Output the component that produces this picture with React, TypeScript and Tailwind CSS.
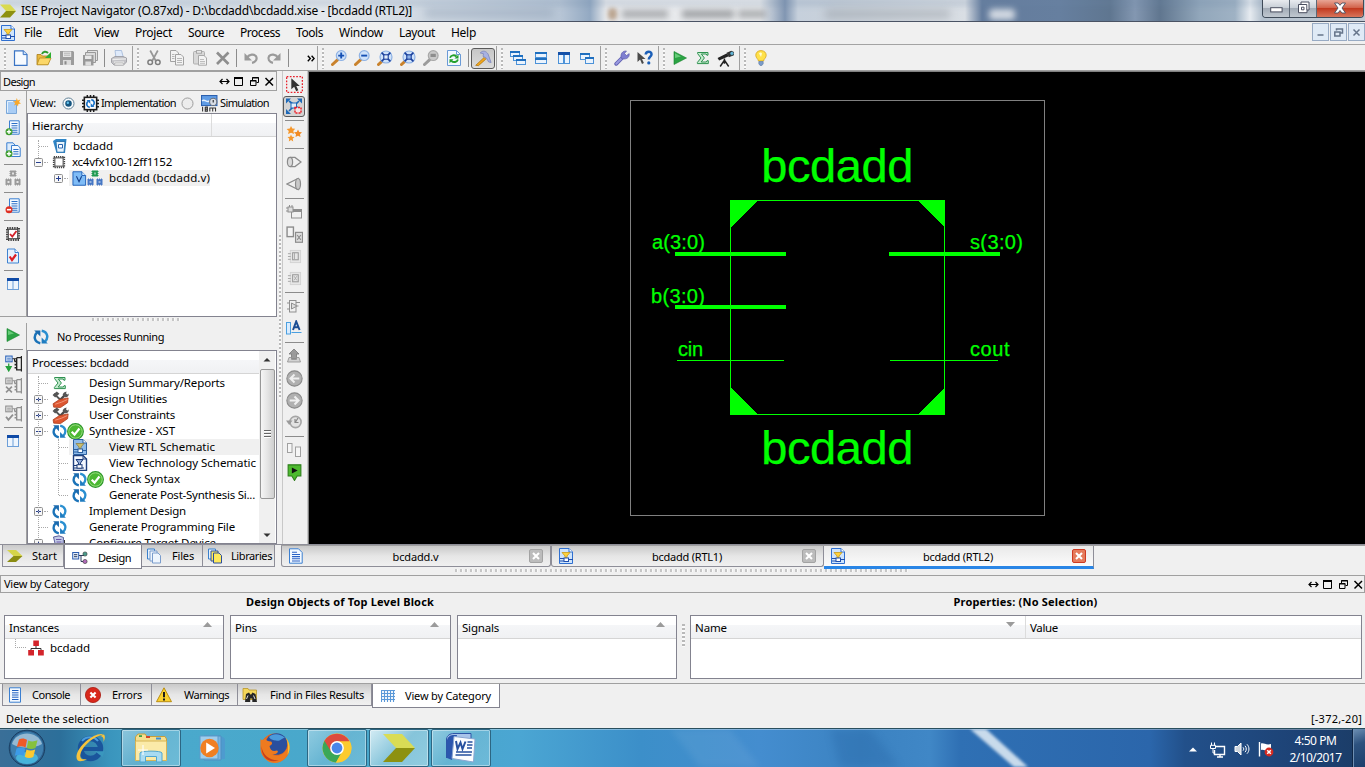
import { useLayoutEffect, useRef, type ReactNode } from "react";

/* ---------- text ---------- */

/** One-line label whose tracking is adjusted so that it spans `w` pixels. */
function T({ w, className = "", children }: { w: number; className?: string; children: string }) {
  const ref = useRef<HTMLSpanElement>(null);
  useLayoutEffect(() => {
    const el = ref.current;
    if (!el) return;
    el.style.letterSpacing = "0px";
    const natural = el.getBoundingClientRect().width;
    el.style.letterSpacing = `${(w - natural) / children.length}px`;
  }, [w, children]);
  return (
    <span ref={ref} className={`inline-block shrink-0 whitespace-nowrap ${className}`}>
      {children}
    </span>
  );
}

/* ---------- icons ---------- */

function I({ s = 16, vb = "0 0 16 16", className = "", children }: { s?: number; vb?: string; className?: string; children: ReactNode }) {
  return (
    <svg width={s} height={s} viewBox={vb} className={`block shrink-0 ${className}`} fill="none">
      {children}
    </svg>
  );
}

const Xilinx = ({ s = 16 }: { s?: number }) => (
  <I s={s}>
    <path d="M0 1.5H10L16 8H6Z" fill="#d9da4f" />
    <path d="M6 8H16L10 14.5H0Z" fill="#8d9010" />
  </I>
);

const Chevron2 = () => (
  <I>
    <path d="M0 2H9L15.5 8H6.5Z" fill="#d5d44a" />
    <path d="M6.5 8H15.5L9 14H0Z" fill="#8b8c12" />
  </I>
);

const SchemDoc = ({ dim }: { dim?: boolean }) => (
  <I>
    <path d="M1.5 .5H11L14.5 4V15.5H1.5Z" fill={dim ? "#8fbbea" : "#cfe4fb"} stroke={dim ? "#2b5f9e" : "#2f6fd0"} />
    <path d="M11 .5V4H14.5" fill="#fff" stroke={dim ? "#2b5f9e" : "#2f6fd0"} />
    <path d="M4 4.5H12L9 8V10H7V8Z" fill={dim ? "#c9bd6c" : "#ffd23c"} stroke={dim ? "#8d8248" : "#c99a18"} strokeWidth=".8" />
    <path d="M2 10.5H6M2 13H6M11 11.5H15" stroke={dim ? "#2b5f9e" : "#1f4fae"} />
    <rect x="6" y="10" width="4.5" height="3.5" fill="#fff" stroke={dim ? "#2b5f9e" : "#1f4fae"} />
  </I>
);

const TechDoc = () => (
  <I>
    <path d="M1.5 .5H11L14.5 4V15.5H1.5Z" fill="#f4f8ff" stroke="#20407e" strokeWidth="1.4" />
    <path d="M11 .5V4H14.5" stroke="#20407e" />
    <path d="M4 4.5H11L8.5 8V10H6.5V8Z" fill="#8fa9d6" stroke="#1b3a78" />
    <path d="M2 10.5H5M2 13H12" stroke="#1b3a78" />
    <rect x="5" y="9.7" width="5" height="3.5" fill="#fff" stroke="#1b3a78" />
  </I>
);

const NewFile = () => (
  <I>
    <path d="M1.5 .8H10.2L14 4.6V15.3H1.5Z" fill="#f7fbff" stroke="#3a74c4" strokeWidth="1.2" />
    <path d="M10.2 .8V4.6H14" fill="#cfe1f7" stroke="#3a74c4" />
  </I>
);

const OpenFile = () => (
  <I>
    <path d="M1 4.5H5L6.5 6H12V14.5H1Z" fill="#e9b93f" stroke="#a87b17" strokeWidth=".8" />
    <path d="M3.5 8H15L12 14.8H1Z" fill="#fbd768" stroke="#b58a20" strokeWidth=".8" />
    <path d="M6 4C7 1.5 10 1 12 3" stroke="#2c9a2c" strokeWidth="2" />
    <path d="M15 2V8H9Z" fill="#2fae2f" />
  </I>
);

const Save = () => (
  <I>
    <path d="M1 1H14L15 2V15H1Z" fill="#9c9c9c" />
    <path d="M4 1.6H12.2V7H4Z" fill="#e6e6e6" />
    <path d="M4 10H12V15H4Z" fill="#dcdcdc" />
    <path d="M5.5 11.2H7.5V14.5H5.5Z" fill="#8b8b8b" />
    <path d="M5 3.2H11.2M5 5.2H11.2" stroke="#b4b4b4" />
  </I>
);

const SaveAll = () => (
  <I>
    <path d="M5.5 .5H15.5V10.5H5.5Z" fill="#e2e2e2" stroke="#999" />
    <path d="M3.5 2.5H13.5V12.5H3.5Z" fill="#dadada" stroke="#999" />
    <path d="M1 5H11.5V15.5H1Z" fill="#999" />
    <path d="M3 5.6H9.5V9H3Z" fill="#e8e8e8" />
    <path d="M3.4 11.5H9V15.5H3.4Z" fill="#dedede" />
  </I>
);

const Print = () => (
  <I>
    <path d="M4 .5L10.5 .5L12.5 8H5Z" fill="#dfeafa" stroke="#9fb6d8" strokeWidth=".8" />
    <path d="M.5 8.5L4 6.5H12L15.5 8V12L12.5 15H3L.5 12.5Z" fill="#c2c2c6" stroke="#96969c" strokeWidth=".8" />
    <path d="M1.5 9.5L15 8.8M3 12.2H13" stroke="#ececec" strokeWidth="1.3" />
    <path d="M4 13H12L13 15H3.5Z" fill="#f6f6f6" stroke="#a5a5a5" strokeWidth=".6" />
  </I>
);

const Cut = () => (
  <I>
    <path d="M4.2 .5L9.6 10.5M11.8 .5L6.4 10.5" stroke="#969696" strokeWidth="1.7" />
    <circle cx="4.2" cy="12.3" r="2.3" stroke="#7e7e7e" strokeWidth="1.5" />
    <circle cx="11.8" cy="12.3" r="2.3" stroke="#7e7e7e" strokeWidth="1.5" />
  </I>
);

const Copy = () => (
  <I>
    <path d="M1.5 .5H7L9.5 3V11.5H1.5Z" fill="#f3f3f3" stroke="#a2a2a2" />
    <path d="M6.5 4.5H12L14.5 7V15H6.5Z" fill="#f3f3f3" stroke="#a2a2a2" />
    <path d="M8 8.5H13M8 10.5H13M8 12.5H13M3 4.5H5.5M3 6.5H5.5M3 8.5H5.5" stroke="#b7b7b7" />
  </I>
);

const Paste = () => (
  <I>
    <rect x="1.5" y="1.5" width="11" height="12.5" rx="1" fill="#d8d8d8" stroke="#b0b0b0" />
    <rect x="4.5" y=".6" width="5" height="2.6" fill="#eee" stroke="#a5a5a5" />
    <path d="M6.5 5.5H12L14.5 8V15.2H6.5Z" fill="#f3f3f3" stroke="#a8a8a8" />
    <path d="M8 9.5H12M8 11.5H13M8 13.3H13" stroke="#bdbdbd" />
  </I>
);

const Del = () => (
  <I>
    <path d="M2 2.5L13.5 14M13.5 2.5L2 14" stroke="#8e8e8e" strokeWidth="2.7" />
  </I>
);

const Undo = ({ flip = false }: { flip?: boolean }) => (
  <I className={flip ? "-scale-x-100" : ""}>
    <path d="M4 7.5C6.5 4 11 3.8 13 6.2C14.5 8.8 13 12 9 12.8" stroke="#9a9a9a" strokeWidth="2.2" />
    <path d="M1.5 3V10.5H9Z" fill="#9a9a9a" />
  </I>
);

const Mag = ({ kind }: { kind: "plus" | "minus" | "fit" | "sel" | "gray" }) => {
  const gray = kind === "gray";
  const big = kind === "fit" || kind === "sel";
  return (
    <I>
      <path d="M1.5 14.5L6.5 9.8" stroke={gray ? "#9b9b9b" : "#c9822c"} strokeWidth="3" strokeLinecap="round" />
      <circle cx={big ? 9 : 10.2} cy={big ? 7 : 5.6} r={big ? 6 : 4.9} fill={gray ? "#c9c9c9" : "#cfe2fa"} stroke={gray ? "#a8a8a8" : "#8fb2e4"} strokeWidth="1.2" />
      {kind === "plus" && <path d="M10.2 2.6V8.6M7.2 5.6H13.2" stroke="#1650b4" strokeWidth="1.9" />}
      {kind === "minus" && <path d="M7.2 5.6H13.2" stroke="#1650b4" strokeWidth="1.9" />}
      {gray && <path d="M7.5 3.8H12.8V7H7.5Z" fill="#8d8d8d" />}
      {big && (
        <>
          <path d="M4.6 2.6L13.4 11.4M13.4 2.6L4.6 11.4" stroke="#1a3f9c" strokeWidth="1.6" />
          <rect x="6.8" y="4.8" width="4.4" height="4.4" fill={kind === "sel" ? "#8fb4ea" : "#e4effc"} stroke="#1a3f9c" strokeWidth="1.1" />
        </>
      )}
    </I>
  );
};

const Refresh = () => (
  <I>
    <path d="M1.5 .5H10.5L14.5 4.5V15.5H1.5Z" fill="#f2f8ff" stroke="#6a9ad6" />
    <path d="M10.5 .5V4.5H14.5" stroke="#6a9ad6" />
    <path d="M4 7.8C5 5 8.5 4.6 10.5 6.5M12 9.5C11 12.3 7.5 12.8 5.4 11" stroke="#23a02c" strokeWidth="1.9" />
    <path d="M12.5 4.6V8.6H8.5ZM3.5 13.2V9.2H7.5Z" fill="#23a02c" />
  </I>
);

const Hammer = () => (
  <I s={18}>
    <path d="M1.5 14.5L9 7.5L10.5 9L4 14.8Z" fill="#f2a81d" stroke="#a56a08" strokeWidth=".6" />
    <path d="M5.5 3.5C8 .8 11 2 12.5 4.5L15.2 12L13 11.5L11 8L8 6.5L8.5 4.2Z" fill="#a7b1e2" stroke="#7a84bc" strokeWidth=".7" />
  </I>
);

const Win = ({ x, y, w, h }: { x: number; y: number; w: number; h: number }) => (
  <>
    <rect x={x + 0.5} y={y + 0.5} width={w - 1} height={h - 1} fill="#eaf3fd" stroke="#4c92d8" />
    <rect x={x} y={y} width={w} height="2" fill="#1f6fbf" />
  </>
);

const Cascade = () => (
  <I>
    <Win x={0} y={1} w={10} h={6} />
    <Win x={3} y={5} w={10} h={6} />
    <Win x={6} y={9} w={10} h={6} />
  </I>
);
const TileH = () => (
  <I>
    <Win x={2} y={2} w={12} h={6} />
    <Win x={2} y={8} w={12} h={6} />
  </I>
);
const TileV = () => (
  <I>
    <Win x={2} y={2} w={6} h={12} />
    <Win x={8} y={2} w={6} h={12} />
    <path d="M2 2H14V5H2Z" fill="#1450a8" />
  </I>
);
const Float = () => (
  <I>
    <Win x={1} y={3} w={10} h={7} />
    <Win x={6} y={7} w={9} h={7} />
  </I>
);

const Wrench = () => (
  <I>
    <path d="M2.2 13.8L9 7" stroke="#6464b4" strokeWidth="3.8" strokeLinecap="round" />
    <path d="M2.2 13.7L9 7" stroke="#9a9ae0" strokeWidth="1.9" strokeLinecap="round" />
    <path d="M7.5 8.5C5.8 4 8.5 .6 12.5 1L10.5 3.5L12.5 5.5L15.2 3.6C15.8 7.6 12 10.2 7.5 8.5Z" fill="#7e7ed0" stroke="#5858a8" strokeWidth=".6" />
  </I>
);

const WhatsThis = () => (
  <I>
    <path d="M.5 2L.5 12L3.1 9.6L5 14L6.9 13.1L5 9H8.5Z" fill="#4a4a4a" />
    <path d="M8.7 4.5C9 .8 14.7 .8 14.5 4.5C14.4 6.7 11.8 6.8 11.8 9.5" stroke="#1b5fb8" strokeWidth="2.5" />
    <circle cx="11.8" cy="12.9" r="1.6" fill="#1b5fb8" />
  </I>
);

const Play = () => (
  <I>
    <path d="M2 1.5L14.5 8L2 14.5Z" fill="#2ba344" stroke="#14852c" strokeWidth=".6" />
    <path d="M3 3.3L9 6.5L3 8Z" fill="#67cc79" />
  </I>
);

const Sigma = () => (
  <I>
    <path d="M2.6 2.5H13V5.2H11.8L11.2 4H6.4L9.4 8L6.2 12H11.4L12 10.7H13.3V13.6H2.4V12.4L6 8L2.6 3.6Z" fill="#c6ecd0" stroke="#2f9150" strokeWidth="1" />
  </I>
);

const Telescope = () => (
  <I s={17}>
    <path d="M.5 7.5L9.5 3L11 5.8L2 9.8Z" fill="#222" />
    <path d="M9 2.6L13.5 .6L15.8 5L11.2 6.8Z" fill="#333" />
    <circle cx="14" cy="3.2" r="1.9" fill="#62b6d8" stroke="#222" strokeWidth=".6" />
    <path d="M7 8V11M7 9.5L3 15.5M7 9.5L11 15.5M7 9V13" stroke="#222" strokeWidth="1.4" />
  </I>
);

const Bulb = () => (
  <I>
    <path d="M8 .6C4.5 .6 2.6 3 2.8 5.6C3 8 5 8.8 5.5 11H10.5C11 8.8 13 8 13.2 5.6C13.4 3 11.5 .6 8 .6Z" fill="#ffe14a" stroke="#d8a51c" strokeWidth=".8" />
    <path d="M6 3.4C6.8 2.3 8.4 2.3 9 3.6L8 7Z" fill="#fffbd2" />
    <path d="M5.8 11.5H10.2V13.8L9 15.4H7L5.8 13.8Z" fill="#7d9cc8" stroke="#4d6e9e" strokeWidth=".5" />
  </I>
);

const DocLines = ({ badge }: { badge?: "plus" | "minus" | "plus2" }) => (
  <I>
    {badge === "plus2" && <path d="M1.8 .8H8L10 3V11H1.8Z" fill="#dcebfb" stroke="#3b7fd0" />}
    <path d={badge === "plus2" ? "M6.5 3.5H13L15.2 6V14.5H6.5Z" : badge ? "M4.5 .8H14.2V14.2H4.5Z" : "M1.5 .8H10.5L14.2 4.5V15.2H1.5Z"} fill="#f4f9ff" stroke="#3b7fd0" />
    {badge === "plus2" ? (
      <path d="M8.3 7.5H13.5M8.3 9.7H13.5M8.3 12H13.5" stroke="#2b6fc6" />
    ) : badge ? (
      <path d="M6.5 3.5H12.5M6.5 5.7H12.5M6.5 8H12.5M6.5 10.2H12.5M6.5 12.3H12.5" stroke="#2b6fc6" strokeWidth="1.1" />
    ) : (
      <path d="M4 4.2H9M4 6.5H12M4 8.6H12M4 10.8H12M4 13H12" stroke="#2b62c6" strokeWidth="1.1" />
    )}
    {badge === "minus" ? (
      <>
        <circle cx="4" cy="11.7" r="3.5" fill="#df2f22" />
        <path d="M1.9 11.7H6.1" stroke="#fff" strokeWidth="1.6" />
      </>
    ) : badge ? (
      <>
        <circle cx="4" cy="11.7" r="3.5" fill="#3f9e2f" />
        <path d="M1.8 11.7H6.2M4 9.5V13.9" stroke="#fff" strokeWidth="1.4" />
      </>
    ) : null}
  </I>
);

const NewSource = () => (
  <I>
    <path d="M1.5 2.5H11.5V15.5H1.5Z" fill="#a9cdf5" stroke="#7aa7d8" />
    <path d="M2.5 14.5V3.5H8" stroke="#e4f1fe" />
    <path d="M11.8 0L12.7 2.6L15.4 1.6L14 4L16 5.6L13.4 5.9L13 8.6L11.5 6.4L9 7.4L10.2 5L8 3.4L10.9 2.9Z" fill="#f7a82d" />
  </I>
);

const Chips = ({ color = "gray" }: { color?: "gray" | "color" }) => {
  const gray = color === "gray";
  const top = gray ? "#9a9a9a" : "#1f9a52";
  const bot = gray ? "#9a9a9a" : "#4677c4";
  const chip = (x: number, y: number, c: string) => (
    <>
      <path d={`M${x + 1.5} ${y}V7M${x + 3.5} ${y}v7M${x + 5.5} ${y}v7M${x} ${y + 1.5}h7M${x} ${y + 3.5}h7M${x} ${y + 5.5}h7`.replace("V7", "v7")} stroke={c} />
      <rect x={x + 1} y={y + 1} width="5" height="5" fill={c} />
      <rect x={x + 2.5} y={y + 2.5} width="2" height="2" fill={gray ? "#e2e2e2" : "#ffffff"} fillOpacity={gray ? 1 : 0.45} />
    </>
  );
  return (
    <I>
      {chip(4.5, 0, top)}
      {chip(0, 8.5, bot)}
      {chip(9, 8.5, bot)}
    </I>
  );
};

const ChipCheck = ({ check = true }: { check?: boolean }) => (
  <I s={check ? 16 : 14}>
    <rect x="2" y="2" width="12" height="12" stroke="#444" strokeWidth="2" strokeDasharray="1.4 1" />
    <rect x="3.3" y="3.3" width="9.4" height="9.4" fill="#fff" stroke="#444" strokeWidth="1.1" />
    {check && <path d="M5 8L7.3 10.5L11.5 5" stroke="#d3222a" strokeWidth="1.8" />}
  </I>
);

const DocCheck = () => (
  <I>
    <path d="M2.5 1H10L13.5 4.5V15H2.5Z" fill="#e6f1fd" stroke="#3f82d0" />
    <path d="M10 1V4.5H13.5" fill="#fff" stroke="#3f82d0" />
    <path d="M4.7 8.5L7 12L11 6.5" stroke="#dd1f24" strokeWidth="2.2" />
  </I>
);

const Cols = () => (
  <I>
    <rect x="2.5" y="2.5" width="11" height="11" fill="#eef5fd" stroke="#6d9fd8" />
    <path d="M2 2H14V5H2Z" fill="#0f4aa6" />
    <path d="M8 5V13.5" stroke="#6d9fd8" />
  </I>
);

const ProcChip = ({ kind }: { kind: "run" | "stop" | "check" }) => {
  const on = kind === "run";
  const c = on ? "#222" : "#8f8f8f";
  return (
    <I s={17}>
      <rect x=".7" y="1" width="6" height="5.4" fill={on ? "#e1eefc" : "#e4e4e4"} stroke={on ? "#2b62b8" : c} />
      <path d="M2 3H5.5M2 4.7H5.5" stroke={on ? "#2b62b8" : c} strokeWidth=".8" />
      <path d="M7 3.5H11M9 3.5V6" stroke={c} />
      <path d="M11 2.5V14.5M15.5 1V15.5M11 2.5H15.5M11 14H15.5" stroke={c} strokeWidth="1.3" />
      <path d="M9 6H11M9 9H11M9 12H11" stroke={c} strokeWidth="1.6" />
      {kind === "run" && <path d="M3.5 8V12M1.2 11H5.8L3.5 15Z" stroke="#25a03c" fill="#25a03c" strokeWidth="1.2" />}
      {kind === "stop" && <path d="M1 9L6.5 14.5M6.5 9L1 14.5" stroke={c} strokeWidth="1.5" />}
      {kind === "check" && <path d="M1 11L3.2 14L7.5 9" stroke={c} strokeWidth="1.7" />}
    </I>
  );
};

const Cycle = ({ s = 16 }: { s?: number }) => (
  <I s={s}>
    <path d="M7.3 14.2C1.2 13 .2 7.2 4 3.4" stroke="#1b73b8" strokeWidth="2.5" />
    <path d="M1.2 1.4H7.4V7.6Z" fill="#1b6aae" />
    <path d="M8.7 1.8C14.8 3 15.8 8.8 12 12.6" stroke="#2a8fd0" strokeWidth="2.5" />
    <path d="M14.8 14.6H8.6V8.4Z" fill="#1f7cc0" />
  </I>
);

const Ok = () => (
  <I s={17}>
    <circle cx="8" cy="8" r="7.4" fill="#4bb832" stroke="#2c962a" />
    <circle cx="8" cy="8" r="6.3" stroke="#a5e08e" strokeWidth=".8" />
    <path d="M4.4 8.2L7.1 10.9L11.7 5.2" stroke="#fff" strokeWidth="2.1" />
  </I>
);

const Tools = () => (
  <I s={17}>
    <path d="M2 2.5L11.5 12" stroke="#555" strokeWidth="1.8" />
    <path d="M.5 3.8L4.5 .4L7 2.5L3 6.2Z" fill="#555" />
    <path d="M13.5 2.5L7.5 8.5" stroke="#4a4a4a" strokeWidth="2.2" />
    <path d="M10 3.4C10.6 1 13 .2 14 .8L12.6 2.6L13.8 3.8L15.7 2.4C16 5.4 14 6.4 11.8 5.8Z" fill="#555" />
    <path d="M1 12L7 8L15.2 6.5L14.7 11L8 15.6L1.6 15.2Z" fill="#dd5630" stroke="#a83a1a" strokeWidth=".7" />
    <path d="M3 12.4L9 10.5L14.5 8" stroke="#f4a184" strokeWidth=".8" />
  </I>
);

const ProjectDoc = () => (
  <I>
    <path d="M1 3L4 1H14.5L13 15H4.5Z" fill="#2f86c8" />
    <path d="M4 3.5H13L12 14.2H5Z" fill="#e8f4fd" stroke="#1e6aa8" strokeWidth=".8" />
    <path d="M6.5 6.5H10.5V10H6.5Z" fill="#fff" stroke="#2b66b0" />
  </I>
);

const VFile = () => (
  <I s={15}>
    <path d="M1 .8H10.5L14.5 4.8V15.2H1Z" fill="#7fbcf6" stroke="#1f60b8" />
    <path d="M10.5 .8V4.8H14.5" fill="#d8ecff" stroke="#1f60b8" />
    <path d="M4.7 5.5L7.5 11.5L10.3 5.5" stroke="#123f8c" strokeWidth="1.2" />
  </I>
);

const ImplChip = () => (
  <I s={17}>
    <rect x="2.2" y="2.2" width="11.6" height="11.6" stroke="#1c1c1c" strokeWidth="1.5" fill="#fff" />
    <path d="M5 0V2M8 0V2M11 0V2M5 14V16M8 14V16M11 14V16M0 5H2M0 8H2M0 11H2M14 5H16M14 8H16M14 11H16" stroke="#1c1c1c" strokeWidth="1.4" />
    <path d="M7.3 11.6C4 11 3.8 7.8 5.6 6M8.7 4.4C12 5 12.2 8.2 10.4 10" stroke="#1b73c8" strokeWidth="1.6" />
    <path d="M4.2 4.8H7.8V8.2ZM11.8 11.2H8.2V7.8Z" fill="#1b73c8" />
  </I>
);

const SimIcon = () => (
  <I s={17}>
    <rect x=".5" y=".5" width="14.5" height="9.5" fill="#5f9ce6" stroke="#2b5fae" />
    <path d="M1 5.5C4 3 5 8 8 5.5" stroke="#e4f1ff" strokeWidth="1.4" />
    <circle cx="11.5" cy="6.5" r="3.4" fill="#d7dde6" stroke="#68707c" />
    <path d="M11.5 4.6V7" stroke="#222" />
    <path d="M.5 10.8H15.5V16H.5Z" fill="#f4f4f4" />
    <path d="M1.5 11V15.5M4 11.4H6V15.2H4V11.4M4 13.3H6M8.3 15.5V12.2H13.7V15.5M11 12.2V15.5" stroke="#333" strokeWidth="1" />
  </I>
);

const Radio = ({ on }: { on?: boolean }) => (
  <I s={13}>
    <circle cx="8" cy="8" r="6.8" fill={on ? "#f8fbfd" : "#ececec"} stroke={on ? "#5c7c92" : "#9a9a9a"} strokeWidth="1.2" />
    {on && <circle cx="8" cy="8" r="4" fill="#15557f" />}
    {on && <circle cx="7.2" cy="7" r="1.5" fill="#62c2ec" />}
  </I>
);

const PlusBox = ({ minus }: { minus?: boolean }) => (
  <I s={9} vb="0 0 9 9">
    <rect x=".5" y=".5" width="8" height="8" rx="1" fill="#f7f7f7" stroke="#8f8f8f" />
    <path d={minus ? "M2 4.5H7" : "M2 4.5H7M4.5 2V7"} stroke="#27408f" />
  </I>
);

const Pointer = () => (
  <I s={17}>
    <rect x=".6" y=".6" width="14.8" height="14.8" stroke="#e8202a" strokeWidth="1.2" strokeDasharray="1.6 1.4" />
    <path d="M5 2V12.5L7.7 10.2L9.6 14.4L11.6 13.4L9.7 9.4H13Z" fill="#333" />
  </I>
);

const ZoomArea = () => (
  <I>
    <path d="M3 3L12 10M13 3L3 13" stroke="#1d69b8" strokeWidth="1.7" />
    <path d="M0 .5H5L0 5.5ZM16 .5V5.5L11 .5ZM0 16V11L5 16Z" fill="#1d69b8" />
    <rect x="5" y="5" width="5.5" height="5" fill="#dfeefc" stroke="#1d69b8" />
    <rect x="9" y="9.5" width="6" height="5.5" fill="#f3e4e6" stroke="#e8202a" strokeWidth="1.5" strokeDasharray="2 1" />
  </I>
);

const Stars = () => (
  <I>
    <path d="M5 0L6.3 2.6L9.2 2.8L7.2 5L8.2 8L5 6.8L2 8L2.8 5L.6 3L3.8 2.6Z" fill="#f5972b" />
    <path d="M12 3.5L13.2 6L16 6.3L14 8.2L14.5 11L12 9.7L9.5 11L10 8.2L8 6.3L10.8 6Z" fill="#f28a22" />
    <path d="M5 8.5L6 10.8L8.5 11L6.7 12.8L7.2 15.4L5 14L2.8 15.4L3.3 12.8L1.5 11L4 10.8Z" fill="#f5972b" />
  </I>
);

const GateR = ({ flip }: { flip?: boolean }) => (
  <I className={flip ? "-scale-x-100" : ""}>
    {flip ? (
      <>
        <path d="M4 2.5L15 8L4 13.5Z" fill="#efefef" stroke="#8b8b8b" strokeWidth="1.2" />
        <ellipse cx="4" cy="8" rx="2.5" ry="5.5" fill="#c9c9c9" stroke="#8b8b8b" strokeWidth="1.2" />
      </>
    ) : (
      <>
        <path d="M4 3.4H9L15 8L9 12.6H4" fill="#efefef" stroke="#8b8b8b" strokeWidth="1.2" />
        <ellipse cx="4" cy="8" rx="2.6" ry="4.6" fill="#d9d9d9" stroke="#8b8b8b" strokeWidth="1.2" />
      </>
    )}
  </I>
);

const GrayWin = () => (
  <I>
    <rect x="5.5" y="5.5" width="10" height="8.5" fill="#f1f1f1" stroke="#8f8f8f" />
    <path d="M5.5 6H15.5V8H5.5Z" fill="#8f8f8f" />
    <rect x="2" y="3" width="5" height="5" fill="#ddd" stroke="#8f8f8f" />
    <path d="M0 4H2M0 7H2M3.5 1V3M6 1V3" stroke="#8f8f8f" />
  </I>
);
const GrayBoxes = () => (
  <I s={17}>
    <rect x="1" y="1" width="6" height="9" fill="#f3f3f3" stroke="#8b8b8b" strokeWidth="1.3" />
    <rect x="9" y="6" width="6.5" height="9.3" fill="#ddd" stroke="#8b8b8b" strokeWidth="1.1" />
    <path d="M10.5 8.5L14 13M14 8.5L10.5 13" stroke="#8b8b8b" />
  </I>
);
const GrayChip = ({ x }: { x?: boolean }) => (
  <I s={15}>
    <rect x="3.5" y="1.5" width="11" height="13" fill="#e6e6e6" stroke="#d2d2d2" />
    <rect x="6" y="4" width="6" height="7.5" stroke="#999" strokeWidth="1.1" />
    {x ? <path d="M7.5 5.5L10.5 10M10.5 5.5L7.5 10" stroke="#aaa" /> : <path d="M8 4V11.5" stroke="#aaa" />}
    <path d="M1 5H4M1 8H4M1 11H4" stroke="#a5a5a5" />
  </I>
);
const GateBox = () => (
  <I>
    <rect x="3.5" y="2.5" width="6.5" height="11.5" fill="#f0f0f0" stroke="#8f8f8f" />
    <path d="M5.5 5L11 8L5.5 11Z" stroke="#8f8f8f" fill="#ddd" />
    <path d="M1 5H3.5M1 11H3.5M10 4.5H14M11 8H12.5" stroke="#8f8f8f" />
  </I>
);
const TextA = () => (
  <I>
    <rect x=".5" y="2.5" width="4" height="11.5" fill="#d9ecff" stroke="#4a9fe0" />
    <path d="M7 10L10.2 1.5L13.6 10M8.2 7.3H12.6" stroke="#1c4e94" strokeWidth="2" />
    <path d="M5.5 12.5H15.5" stroke="#4a9fe0" />
  </I>
);
const UpPage = () => (
  <I>
    <path d="M8 1L13 6H10.5V11H5.5V6H3Z" fill="#9a9a9a" stroke="#777" strokeWidth=".8" />
    <path d="M3 9.5H5.5V11.5H10.5V9.5H13L14.5 14H1.5Z" fill="#d2d2d2" stroke="#8d8d8d" strokeWidth=".8" />
  </I>
);
const Round = ({ right }: { right?: boolean }) => (
  <I s={17} className={right ? "-scale-x-100" : ""}>
    <circle cx="8" cy="8" r="7.2" fill="#b0b0b0" stroke="#8a8a8a" />
    <path d="M12.5 8H4.5M8 4.3L4.2 8L8 11.7" stroke="#efefef" strokeWidth="1.9" />
  </I>
);
const Hist = () => (
  <I>
    <circle cx="9.5" cy="8" r="5.6" fill="#e3e3e3" stroke="#a6a6a6" strokeWidth="1.6" />
    <path d="M9 5V8.5H12.5M12 4L9.5 8" stroke="#888" strokeWidth="1.2" />
    <path d="M0 6.5H6.5L3.2 11Z" fill="#9a9a9a" />
  </I>
);
const TwoPages = () => (
  <I>
    <rect x="1.5" y="1.5" width="4.5" height="9" fill="#f6f6f6" stroke="#a0a0a0" />
    <rect x="9.5" y="5" width="5" height="9.5" fill="#f6f6f6" stroke="#a0a0a0" />
  </I>
);
const GreenPin = () => (
  <I s={17}>
    <path d="M2 .8H14V11.3H10.5L8 15.5L5.5 11.3H2Z" fill="#4dba2e" stroke="#2d7d1a" />
    <path d="M5.5 3.2L11 6L5.5 9Z" fill="#111" />
  </I>
);

const Pages = ({ fill, stroke }: { fill: string; stroke: string }) => (
  <I>
    <path d="M1.5 1H8.5V11H1.5Z" fill="#e6f1fc" stroke="#3a80cc" />
    <path d="M4 3H11V13H4Z" fill={fill} stroke={stroke} />
    <path d="M6.5 5H12L14.5 7.5V15H6.5Z" fill={fill} stroke={stroke} />
  </I>
);
const DesignIcon = () => (
  <I>
    <rect x=".7" y="3.5" width="6" height="6.5" fill="#e5f0fd" stroke="#2c5cae" />
    <path d="M2 5.7H5.3M2 7.7H5.3M7 6.5H12M9 6.5V12.5H12" stroke="#2c3c5e" />
    <circle cx="13" cy="5" r="2.1" fill="#4a9c8a" stroke="#333" strokeWidth=".6" />
    <circle cx="13" cy="12.5" r="2.1" fill="#b06ab8" stroke="#333" strokeWidth=".6" />
  </I>
);
const ConfigIcon = () => (
  <I>
    <path d="M1.5 2L7 .8L11.5 2.5L11 11L4 12.5Z" fill="#c3cbe8" stroke="#5b5f9a" />
    <path d="M4 4.5H9.5M4.5 7H9.5" stroke="#6a54a8" />
    <path d="M12.5 5V13M9.8 10.5H15.2L12.5 14.5Z" stroke="#333" fill="#2fa03a" />
  </I>
);
const ConsoleIcon = () => (
  <I>
    <path d="M2.5 .8H13.5V15.2H2.5Z" fill="#f4f9ff" stroke="#3b7fd0" />
    <path d="M5 3.5H11.5M5 5.8H11.5M5 8H11.5M5 10.2H11.5M5 12.5H11.5" stroke="#1f5fc0" />
  </I>
);
const ErrorIcon = () => (
  <I>
    <circle cx="8" cy="8" r="7.6" fill="#d8281c" stroke="#a81a10" strokeWidth=".8" />
    <path d="M5.4 5.4L10.6 10.6M10.6 5.4L5.4 10.6" stroke="#fff" strokeWidth="2.1" />
  </I>
);
const WarnIcon = () => (
  <I>
    <path d="M8 .8L15.5 14.7H.5Z" fill="#fbd12e" stroke="#b98d10" strokeLinejoin="round" />
    <path d="M8 5V10.2M8 11.6V13.4" stroke="#1c1c1c" strokeWidth="2" />
  </I>
);
const FindIcon = () => (
  <I>
    <path d="M1 1.5H6L7 3H14.5V12.5H1Z" fill="#f4d65a" stroke="#b8962a" strokeWidth=".8" />
    <path d="M4 7L7 5.5L8.3 7.5H9.2L10.5 5.5L13.5 7L15 15H10.3V11.5H8.2V15H3Z" fill="#262626" />
    <path d="M4.5 12L6 8.5M11.5 8.5L13 12" stroke="#ddd" />
  </I>
);
const GridIcon = () => (
  <I>
    <path d="M1 2H15V13.5H1Z" fill="#eef5fc" />
    <path d="M1 2.5H15M1 5.5H15M1 8.5H15M1 11.5H15M1.5 2V14M4.5 2V14M7.5 2V14M10.5 2V14M13.5 2V14" stroke="#5a98d8" />
  </I>
);
const RedTree = () => (
  <I>
    <path d="M8 6V8.5M3 11V8.5H13V11" stroke="#333" />
    <path d="M5.3 .5H10.9V6H5.3ZM.2 10H6V15.6H.2ZM10 10H15.8V15.6H10Z" fill="#d3242b" />
  </I>
);

/* ---------- small building blocks ---------- */

const Grip = ({ className = "" }: { className?: string }) => (
  <div className={`shrink-0 bg-[linear-gradient(#b9b9b9_50%,#fafafa_50%)] [background-size:2px_4px] ${className}`} />
);
const GripX = ({ className = "" }: { className?: string }) => (
  <div className={`h-[3px] shrink-0 bg-[linear-gradient(90deg,#c6c6c6_2px,#fafafa_2px,#fafafa_3px,transparent_3px)] [background-size:5px_3px] ${className}`} />
);
const Cell = ({ children }: { children?: ReactNode }) => <div className="flex h-full w-[23px] shrink-0 items-center justify-center">{children}</div>;
const VCell = ({ children }: { children?: ReactNode }) => <div className="flex h-[22px] w-full shrink-0 items-center justify-center">{children}</div>;
const Sep = ({ className = "" }: { className?: string }) => (
  <div className={`flex h-full shrink-0 items-center justify-center ${className}`}>
    <div className="h-[18px] w-px bg-[#8c8c8c]" />
  </div>
);
const VSep = () => (
  <div className="flex h-[6px] w-full shrink-0 items-center justify-center">
    <div className="h-px w-[19px] bg-[#8c8c8c]" />
  </div>
);
const Group = ({ className, children }: { className: string; children: ReactNode }) => (
  <div className={`flex h-full shrink-0 items-center border-r border-[#a0a0a0] pl-[4px] ${className}`}>
    <Grip className="mr-[3px] h-[21px] w-[2px]" />
    {children}
  </div>
);

const DockButtons = () => (
  <svg width="55" height="11" viewBox="0 0 55 11" className="block shrink-0" fill="none">
    <path d="M1 5.5H10M3.5 3L1 5.5L3.5 8M7.5 3L10 5.5L7.5 8" stroke="#000" strokeWidth="1.2" />
    <path d="M15.5 1.5H23.5V9.5H15.5Z" stroke="#000" />
    <path d="M15 2H24" stroke="#000" strokeWidth="2" />
    <path d="M33.5 4V1.5H39.5V6.5H37.5M33 2H40" stroke="#000" />
    <path d="M31.5 4.5H37V9.5H31.5ZM31 5H37.5" stroke="#000" />
    <path d="M46.5 2L54 9.5M54 2L46.5 9.5" stroke="#000" strokeWidth="1.5" />
  </svg>
);

const headBg = "bg-[linear-gradient(#ffffff_40%,#f5f6f8_42%,#f0f1f3)]";
const tabBg = "bg-[linear-gradient(#c9c9c9,#e6e6e6_50%,#f0f0f0)]";
const fTah = "font-['Noto_Sans',sans-serif] text-[11px]";
const fSeg = "font-['Noto_Sans',sans-serif] text-[11.5px]";

/* ---------- title and menu ---------- */

function TitleBar() {
  return (
    <div className="relative flex h-[22px] shrink-0 items-center overflow-hidden border-b border-[#4a5364] bg-[linear-gradient(90deg,#dfe5ea_0,#d8dfe6_200px,#e4e8ec_330px,#cfd8e2_430px,#b8c6d6_560px,#93a9c2_590px,#e7e9ec_606px,#e9ebed_760px,#8196b2_785px,#c6d0dc_798px,#c9d1da_840px,#d9dee4_965px,#647c9d_982px,#667f9f_1060px,#5f7690_1110px,#8397b1_1135px,#60768f_1160px,#92a7bb_1200px,#9fb2c4_1235px,#e6ebf0_1250px,#b4c1ce_1262px,#c3ccd6_1365px)]">
      <div className="absolute left-0 top-0 h-[5px] w-full bg-[#6c87a6] opacity-30 blur-[3px]" />
      <div className="absolute left-[608px] top-[8px] h-[12px] w-[9px] rounded-sm bg-[#a98a6c] opacity-70 blur-[2px]" />
      <div className="absolute left-[424px] top-[9px] h-[8px] w-[130px] rounded-sm bg-[#8a9bb0] opacity-50 blur-[4px]" />
      <div className="absolute left-[622px] top-[10px] h-[8px] w-[46px] bg-[#6f7276] opacity-50 blur-[3px]" />
      <div className="absolute left-[682px] top-[10px] h-[8px] w-[52px] bg-[#6f7276] opacity-60 blur-[3px]" />
      <div className="absolute left-[738px] top-[10px] h-[8px] w-[28px] bg-[#6f7276] opacity-50 blur-[3px]" />
      <div className="absolute left-[825px] top-[10px] h-[8px] w-[125px] bg-[#8d949c] opacity-50 blur-[4px]" />
      <div className="absolute left-[989px] top-[9px] h-[11px] w-[26px] rounded bg-[#dfe4ea] opacity-90 blur-[3px]" />
      <div className="relative flex items-center">
        <Xilinx s={16} />
        <T w={391} className="ml-[5px] font-['Noto_Sans',sans-serif] text-[12px] text-black">
          ISE Project Navigator (O.87xd) - D:\bcdadd\bcdadd.xise - [bcdadd (RTL2)]
        </T>
      </div>
      <div className="relative ml-auto mr-[1px] flex h-[18px] self-start overflow-hidden rounded-b-[4px] border border-t-0 border-[#3e4a58]">
        <div className="flex w-[27px] items-center justify-center border-r border-[#5d6977] bg-[linear-gradient(#e8ebef,#c8cfd7_45%,#a3acb7_50%,#c0c8d0)]">
          <svg width="13" height="6" viewBox="0 0 13 6" className="mt-[3px]">
            <rect x=".7" y=".7" width="11.4" height="4.2" fill="#fff" stroke="#4a4f60" />
          </svg>
        </div>
        <div className="flex w-[27px] items-center justify-center border-r border-[#5d6977] bg-[linear-gradient(#e8ebef,#c8cfd7_45%,#a3acb7_50%,#c0c8d0)]">
          <svg width="13" height="13" viewBox="0 0 13 13" className="-mt-[2px]">
            <path d="M4 1H12V9H10V11.7H1.5V3.5H4Z" fill="#fff" stroke="#4a4f60" />
            <path d="M4 3.5H9.8V9M4.5 6.2H7V8.8H4.5Z" fill="none" stroke="#4a4f60" />
          </svg>
        </div>
        <div className="flex w-[46px] items-center justify-center bg-[linear-gradient(#e8a595,#d2634b_45%,#c23a20_50%,#d8745a)]">
          <svg width="14" height="12" viewBox="0 0 14 12" className="-mt-[2px]">
            <path d="M1.5 1H5L7 3.3L9 1H12.5L9 6L12.5 11H9L7 8.5L5 11H1.5L5 6Z" fill="#fff" stroke="#4a4f60" strokeWidth=".9" />
          </svg>
        </div>
      </div>
    </div>
  );
}

const MENUS: [string, number, string][] = [
  ["File", 18, "ml-[8px]"],
  ["Edit", 20, "ml-[16px]"],
  ["View", 25, "ml-[16px]"],
  ["Project", 37, "ml-[16px]"],
  ["Source", 36, "ml-[16px]"],
  ["Process", 40, "ml-[16px]"],
  ["Tools", 27, "ml-[16px]"],
  ["Window", 44, "ml-[16px]"],
  ["Layout", 36, "ml-[16px]"],
  ["Help", 25, "ml-[16px]"],
];

function MdiButton({ d }: { d: string }) {
  return (
    <div className="ml-[1px] flex h-[18px] w-[17px] items-center justify-center border border-[#98abc4] bg-[#dfeaf6]">
      <svg width="11" height="11" viewBox="0 0 11 11" fill="none">
        <path d={d} stroke="#66758a" strokeWidth="1.5" />
      </svg>
    </div>
  );
}

function MenuBar() {
  return (
    <div className="flex h-[23px] shrink-0 items-center border-b border-[#a3a3a3] bg-[#f0f0f0]">
      <SchemDoc />
      {MENUS.map(([m, w, c]) => (
        <T key={m} w={w} className={`font-['Noto_Sans',sans-serif] text-[12px] ${c}`}>
          {m}
        </T>
      ))}
      <div className="ml-auto -mt-[2px] flex">
        <MdiButton d="M2.5 8H8.5" />
        <MdiButton d="M3.5 3.5V2H9.5V6H7.5M1.8 5H7V9H1.8Z" />
        <MdiButton d="M2.5 2.5L8.5 8.5M8.5 2.5L2.5 8.5" />
      </div>
    </div>
  );
}

function Toolbar() {
  return (
    <div className="flex h-[26px] shrink-0 items-center border-b border-[#a0a0a0] bg-[#f0f0f0] pt-px">
      <Group className="w-[133px]">
        <Cell><NewFile /></Cell>
        <Cell><OpenFile /></Cell>
        <Cell><Save /></Cell>
        <Cell><SaveAll /></Cell>
        <Sep className="w-[6px]" />
        <Cell><Print /></Cell>
      </Group>
      <Group className="w-[185px]">
        <Cell><Cut /></Cell>
        <Cell><Copy /></Cell>
        <Cell><Paste /></Cell>
        <Cell><Del /></Cell>
        <Sep className="w-[5px]" />
        <Cell><Undo /></Cell>
        <Cell><Undo flip /></Cell>
        <Sep className="w-[7px]" />
        <svg width="8" height="7" viewBox="0 0 8 7" fill="none" className="ml-auto mr-[2px]">
          <path d="M.8 .8L3.3 3.5L.8 6.2M4.6 .8L7.1 3.5L4.6 6.2" stroke="#000" strokeWidth="1.4" />
        </svg>
      </Group>
      <Group className="w-[179px]">
        <Cell><Mag kind="plus" /></Cell>
        <Cell><Mag kind="minus" /></Cell>
        <Cell><Mag kind="fit" /></Cell>
        <Cell><Mag kind="sel" /></Cell>
        <Cell><Mag kind="gray" /></Cell>
        <Cell><Refresh /></Cell>
        <Sep className="w-[6px]" />
        <div className="flex h-[21px] w-[24px] items-center justify-center rounded-[3px] border border-[#5a5a5a] bg-[linear-gradient(#c6c6c6,#dcdcdc)]">
          <Hammer />
        </div>
      </Group>
      <Group className="w-[104px]">
        <Cell><Cascade /></Cell>
        <Cell><TileH /></Cell>
        <Cell><TileV /></Cell>
        <Cell><Float /></Cell>
      </Group>
      <Group className="w-[58px]">
        <Cell><Wrench /></Cell>
        <Cell><WhatsThis /></Cell>
      </Group>
      <Group className="w-[81px]">
        <Cell><Play /></Cell>
        <Cell><Sigma /></Cell>
        <Cell><Telescope /></Cell>
      </Group>
      <div className="flex h-full items-center pl-[4px]">
        <Grip className="mr-[3px] h-[21px] w-[2px]" />
        <Cell><Bulb /></Cell>
      </div>
    </div>
  );
}

/* ---------- design dock ---------- */

const Dots = ({ className }: { className: string }) => <div className={`border-dotted border-[#a9a9a9] ${className}`} />;

type RowProps = { depth: 0 | 1; box?: "plus" | "minus"; icons: ReactNode; label: string; w: number; gap: string; sel?: string };

function Row({ depth, box, icons, label, w, gap, sel = "" }: RowProps) {
  return (
    <div className="flex h-[16px] shrink-0 items-center">
      {depth === 1 && <div className="h-full w-[20px] shrink-0" />}
      <div className="ml-[6px] flex h-full w-[15px] shrink-0 items-center">
        {box ? <PlusBox minus={box === "minus"} /> : <Dots className="ml-[5px] w-[9px] border-t" />}
        {box && <Dots className="ml-px w-[4px] border-t" />}
      </div>
      <div className={`flex h-full items-center pl-[3px] ${sel}`}>
        <div className={`flex shrink-0 items-center ${gap}`}>{icons}</div>
        <T w={w} className={fSeg}>{label}</T>
      </div>
    </div>
  );
}

function DesignDock() {
  return (
    <div className="flex w-[277px] shrink-0 flex-col">
      <div className="flex h-[20px] shrink-0 items-center justify-between border border-[#a0a0a0] pl-[2px] pr-[2px]">
        <T w={32} className={`pt-px ${fTah}`}>Design</T>
        <DockButtons />
      </div>
      <div className="flex h-[226px] shrink-0">
        <div className="flex w-[27px] shrink-0 flex-col border-b border-r border-[#a0a0a0] pt-[4px]">
          <VCell><NewSource /></VCell>
          <VCell><DocLines badge="plus" /></VCell>
          <VCell><DocLines badge="plus2" /></VCell>
          <VSep />
          <VCell><Chips /></VCell>
          <VSep />
          <VCell><DocLines badge="minus" /></VCell>
          <VSep />
          <VCell><ChipCheck /></VCell>
          <VCell><DocCheck /></VCell>
          <VSep />
          <VCell><Cols /></VCell>
        </div>
        <div className="flex min-w-0 flex-1 flex-col">
          <div className="flex h-[22px] shrink-0 items-center pl-[3px] pt-[2px]">
            <T w={26} className={fTah}>View:</T>
            <div className="ml-[6px]"><Radio on /></div>
            <div className="ml-[7px]"><ImplChip /></div>
            <T w={75} className={`ml-[2px] ${fTah}`}>Implementation</T>
            <div className="ml-[5px]"><Radio /></div>
            <div className="ml-[7px]"><SimIcon /></div>
            <T w={49} className={`ml-[2px] ${fTah}`}>Simulation</T>
          </div>
          <div className="relative flex flex-1 flex-col border border-[#83838f] bg-white">
            <div className={`mb-px flex h-[23px] shrink-0 items-center border-b border-[#d5d5d5] pl-[4px] ${headBg}`}>
              <T w={51} className={`pt-[2px] ${fSeg}`}>Hierarchy</T>
              <div className="ml-auto mr-[64px] h-full w-px bg-[#dcdcdc]" />
            </div>
            <Dots className="absolute left-[10px] top-[26px] h-[18px] border-l" />
            <Row depth={0} icons={<ProjectDoc />} gap="w-[21px]" label="bcdadd" w={40} />
            <Row depth={0} box="minus" icons={<ChipCheck check={false} />} gap="w-[20px]" label="xc4vfx100-12ff1152" w={100} />
            <Row depth={1} box="plus" icons={<><VFile /><Chips color="color" /></>} gap="w-[37px]" label="bcdadd (bcdadd.v)" w={101} sel="bg-[#f0f0f0]" />
          </div>
        </div>
      </div>
      <div className="flex h-[6px] shrink-0 items-start pl-[92px] pt-[1px]">
        <GripX className="w-[88px]" />
      </div>
      <div className="flex min-h-0 flex-1">
        <div className="flex w-[27px] shrink-0 flex-col border-r border-[#a0a0a0] pt-[1px]">
          <VCell><Play /></VCell>
          <VSep />
          <VCell><ProcChip kind="run" /></VCell>
          <VCell><ProcChip kind="stop" /></VCell>
          <VSep />
          <VCell><ProcChip kind="check" /></VCell>
          <VSep />
          <VCell><Cols /></VCell>
        </div>
        <div className="flex min-w-0 flex-1 flex-col">
          <div className="flex h-[27px] shrink-0 items-center pl-[6px]">
            <Cycle />
            <T w={107} className={`ml-[8px] ${fTah}`}>No Processes Running</T>
          </div>
          <div className="flex min-h-0 flex-1 border border-[#83838f] bg-white">
            <div className="relative flex w-[231px] shrink-0 flex-col overflow-hidden">
              <div className={`mb-px flex h-[23px] shrink-0 items-center border-b border-[#d5d5d5] pl-[4px] ${headBg}`}>
                <T w={97} className={`pt-[2px] ${fSeg}`}>Processes: bcdadd</T>
              </div>
              <Dots className="absolute left-[10px] top-[25px] h-[170px] border-l" />
              <Dots className="absolute left-[30px] top-[88px] h-[56px] border-l" />
              <Row depth={0} icons={<Sigma />} gap="w-[37px]" label="Design Summary/Reports" w={136} />
              <Row depth={0} box="plus" icons={<Tools />} gap="w-[37px]" label="Design Utilities" w={78} />
              <Row depth={0} box="plus" icons={<Tools />} gap="w-[37px]" label="User Constraints" w={86} />
              <Row depth={0} box="minus" icons={<><Cycle s={15} /><Ok /></>} gap="w-[37px]" label="Synthesize - XST" w={86} />
              <Row depth={1} icons={<SchemDoc dim />} gap="w-[37px]" label="View RTL Schematic" w={106} sel="flex-1 bg-[#f0f0f0]" />
              <Row depth={1} icons={<TechDoc />} gap="w-[37px]" label="View Technology Schematic" w={147} />
              <Row depth={1} icons={<><Cycle s={15} /><Ok /></>} gap="w-[37px]" label="Check Syntax" w={71} />
              <Row depth={1} icons={<Cycle s={15} />} gap="w-[37px]" label="Generate Post-Synthesis Si..." w={146} />
              <Row depth={0} box="plus" icons={<Cycle s={15} />} gap="w-[37px]" label="Implement Design" w={97} />
              <Row depth={0} icons={<Cycle s={15} />} gap="w-[37px]" label="Generate Programming File" w={146} />
              <Row depth={0} box="plus" icons={<ConfigIcon />} gap="w-[37px]" label="Configure Target Device" w={127} />
            </div>
            <div className="flex w-[16px] shrink-0 flex-col items-center bg-[#f0f0f0]">
              <svg width="16" height="18" viewBox="0 0 16 18"><path d="M4.5 10.5L8 7L11.5 10.5Z" fill="#333" /></svg>
              <div className="flex h-[130px] w-[15px] flex-col items-center justify-center gap-[1px] rounded-[2px] border border-[#979797] bg-[linear-gradient(90deg,#f5f5f5,#e4e4e4_50%,#cfcfcf)]">
                <div className="h-[2px] w-[7px] border-t border-[#666] bg-white" />
                <div className="h-[2px] w-[7px] border-t border-[#666] bg-white" />
                <div className="h-[2px] w-[7px] border-t border-[#666] bg-white" />
              </div>
              <svg width="16" height="18" viewBox="0 0 16 18" className="mt-auto mb-[-1px]"><path d="M4.5 7.5L8 11L11.5 7.5Z" fill="#333" /></svg>
            </div>
          </div>
        </div>
      </div>
    </div>
  );
}

function CanvasTools() {
  return (
    <div className="flex w-[26px] shrink-0 flex-col border-l border-r border-[#c8c8c8] bg-[#f0f0f0] pr-[2px] pt-[2px]">
      <VCell><Pointer /></VCell>
      <VCell>
        <div className="flex h-[21px] w-[22px] items-center justify-center rounded-[3px] border border-[#5a5a5a] bg-[#d4d4d4]"><ZoomArea /></div>
      </VCell>
      <VSep />
      <VCell><Stars /></VCell>
      <VSep />
      <VCell><GateR /></VCell>
      <VCell><GateR flip /></VCell>
      <VSep />
      <VCell><GrayWin /></VCell>
      <VCell><GrayBoxes /></VCell>
      <VCell><GrayChip /></VCell>
      <VCell><GrayChip x /></VCell>
      <VSep />
      <VCell><GateBox /></VCell>
      <VCell><TextA /></VCell>
      <VSep />
      <VCell><UpPage /></VCell>
      <VCell><Round /></VCell>
      <VCell><Round right /></VCell>
      <VCell><Hist /></VCell>
      <VSep />
      <VCell><TwoPages /></VCell>
      <VCell><GreenPin /></VCell>
    </div>
  );
}

/* ---------- schematic ---------- */

function Schematic() {
  const g = "#00ff00";
  const text = "font-['Liberation_Sans',Arial,sans-serif]";
  return (
    <svg width="1056" height="472" viewBox="309 72 1056 472" className="block bg-black" fill="none">
      <rect x="630.5" y="100.5" width="414" height="415" stroke="#808080" />
      <rect x="730.5" y="200.5" width="214" height="214" stroke={g} />
      <path d="M730 200H758L730 228ZM945 200V228L917 200ZM730 415V387L758 415ZM945 415H917L945 387Z" fill={g} shapeRendering="crispEdges" />
      <path d="M675 252H786V256H675ZM889 252H1000V256H889ZM675 305H786V309H675ZM677 360H784V361H677ZM890 360H998V361H890Z" fill={g} />
      <g fill={g} stroke={g} strokeWidth=".25" className={text}>
        <text x="761.3" y="182" fontSize="47" textLength="152">bcdadd</text>
        <text x="761.3" y="464" fontSize="47" textLength="152">bcdadd</text>
        <text x="652" y="249" fontSize="20" textLength="53">a(3:0)</text>
        <text x="651" y="303" fontSize="20" textLength="54">b(3:0)</text>
        <text x="970" y="249" fontSize="20" textLength="53">s(3:0)</text>
        <text x="678" y="356" fontSize="20" textLength="25">cin</text>
        <text x="970" y="356" fontSize="20" textLength="39.5">cout</text>
      </g>
    </svg>
  );
}

/* ---------- tabs ---------- */

function Tab({ icon, label, w, width, active, gap, drop = "" }: { icon: ReactNode; label: string; w: number; width: string; active?: boolean; gap: string; drop?: string }) {
  return (
    <div
      className={`flex shrink-0 items-center ${width} ${
        active ? "h-[24px] border-x border-b border-[#83838f] bg-white pl-[7px]" : `h-[22px] border-b border-r border-[#8e8e98] pl-[4px] ${tabBg}`
      }`}
    >
      {icon}
      <T w={w} className={`${fTah} ${gap} ${drop}`}>{label}</T>
    </div>
  );
}

function CloseBox({ hot }: { hot?: boolean }) {
  return (
    <div className={`flex size-[14px] items-center justify-center rounded-[2px] border ${hot ? "border-[#cf3a22] bg-[#e57b5c]" : "border-[#a3a3a3] bg-[#bcbcbc]"}`}>
      <svg width="8" height="8" viewBox="0 0 8 8"><path d="M1 1L7 7M7 1L1 7" stroke="#fff" strokeWidth="2.1" /></svg>
    </div>
  );
}

function EditorTab({ icon, label, w, width, active }: { icon: ReactNode; label: string; w: number; width: string; active?: boolean }) {
  return (
    <div
      className={`flex shrink-0 items-center ${width} ${
        active ? "h-[23px] border-b-[3px] border-r border-b-[#2a86e6] border-r-[#8e8e98] bg-[linear-gradient(#e9e9e9,#fbfbfb)] pl-[6px]" : `h-[21px] rounded-b-[3px] border-b border-r border-[#8e8e98] pl-[6px] ${tabBg}`
      }`}
    >
      {icon}
      <div className="flex flex-1 justify-center pl-[11px] pr-[13px] pt-px">
        <T w={w} className={fTah}>{label}</T>
      </div>
      <div className={active ? "mr-[7px]" : "mr-[7px]"}><CloseBox hot={active} /></div>
    </div>
  );
}

function TabRows() {
  return (
    <div className="flex h-[31px] shrink-0 items-start border-t border-[#8e8e98] bg-[#f0f0f0]">
      <div className="flex w-[281px] shrink-0 items-start pl-[2px]">
        <Tab icon={<Chevron2 />} label="Start" w={25} width="w-[62px] border-l" gap="ml-[9px]" drop="pt-px" />
        <Tab icon={<DesignIcon />} label="Design" w={33} width="w-[78px]" active gap="ml-[10px]" drop="pt-[2px]" />
        <Tab icon={<Pages fill="#eef5fd" stroke="#7a9ccc" />} label="Files" w={22} width="w-[61px]" gap="ml-[10px]" drop="pt-px" />
        <Tab icon={<Pages fill="#ffe95c" stroke="#2c4f9e" />} label="Libraries" w={41} width="w-[72px]" gap="ml-[8px]" drop="pt-px" />
      </div>
      <div className="flex min-w-0 flex-1 flex-col">
        <div className="flex h-[24px] items-start border-t border-[#a0a0a0]">
          <EditorTab icon={<DocLines />} label="bcdadd.v" w={46} width="w-[270px] border-l" />
          <EditorTab icon={<SchemDoc />} label="bcdadd (RTL1)" w={70} width="w-[273px] border-l" />
          <EditorTab icon={<SchemDoc />} label="bcdadd (RTL2)" w={70} width="w-[270px]" active />
        </div>
        <GripX className="ml-[174px] w-[453px]" />
      </div>
    </div>
  );
}

/* ---------- category dock ---------- */

function Tri({ down }: { down?: boolean }) {
  return (
    <svg width="9" height="5" viewBox="0 0 9 5" className={down ? "rotate-180" : ""}>
      <path d="M0 5L4.5 0L9 5Z" fill="#9b9b9b" />
    </svg>
  );
}

function ListBox({ width, title, w, children }: { width: string; title: string; w: number; children?: ReactNode }) {
  return (
    <div className={`h-[64px] shrink-0 border border-[#83838f] bg-white ${width}`}>
      <div className={`flex h-[23px] border-b border-[#d5d5d5] pl-[4px] pr-[11px] ${headBg}`}>
        <T w={w} className={`mt-[4px] ${fSeg}`}>{title}</T>
        <div className="ml-auto mt-[6px]"><Tri /></div>
      </div>
      {children}
    </div>
  );
}

function CategoryDock() {
  return (
    <div className="flex h-[153px] shrink-0 flex-col bg-[#f0f0f0]">
      <div className="flex h-[18px] shrink-0 items-center justify-between border border-[#a0a0a0] pl-[3px] pr-[1px]">
        <T w={85} className={fTah}>View by Category</T>
        <DockButtons />
      </div>
      <div className="flex h-[22px] shrink-0 items-start pt-[1px]">
        <div className="flex w-[680px] justify-center"><T w={188} className={`${fTah} font-bold`}>Design Objects of Top Level Block</T></div>
        <div className="flex flex-1 justify-center pl-[6px]"><T w={144} className={`${fTah} font-bold`}>Properties: (No Selection)</T></div>
      </div>
      <div className="flex h-[68px] shrink-0 pl-[4px]">
        <ListBox width="w-[220px]" title="Instances" w={50}>
          <div className="flex h-[18px] items-center pl-[10px]">
            <Dots className="mb-[9px] h-[9px] w-[11px] border-b border-l" />
            <div className="ml-[2px]"><RedTree /></div>
            <T w={40} className={`ml-[6px] ${fSeg}`}>bcdadd</T>
          </div>
        </ListBox>
        <ListBox width="ml-[6px] w-[221px]" title="Pins" w={22} />
        <ListBox width="ml-[6px] w-[220px]" title="Signals" w={37} />
        <Grip className="ml-[5px] mt-[9px] h-[23px] w-[3px]" />
        <div className="ml-[5px] h-[64px] w-[672px] border border-[#83838f] bg-white">
          <div className={`flex h-[23px] border-b border-[#d5d5d5] pl-[4px] ${headBg}`}>
            <T w={32} className={`mt-[4px] ${fSeg}`}>Name</T>
            <div className="ml-auto mt-[6px]"><Tri down /></div>
            <div className="ml-[10px] h-full w-px bg-[#dcdcdc]" />
            <div className="flex w-[335px] pl-[4px]"><T w={28} className={`mt-[4px] ${fSeg}`}>Value</T></div>
          </div>
        </div>
      </div>
      <div className="flex h-[25px] shrink-0 items-start border-t border-[#a0a0a0] pl-[2px]">
        <Tab icon={<ConsoleIcon />} label="Console" w={38} width="w-[79px] border-l" gap="ml-[9px]" />
        <Tab icon={<ErrorIcon />} label="Errors" w={30} width="w-[71px]" gap="ml-[11px]" />
        <Tab icon={<WarnIcon />} label="Warnings" w={45} width="w-[86px]" gap="ml-[12px]" />
        <Tab icon={<FindIcon />} label="Find in Files Results" w={94} width="w-[134px]" gap="ml-[12px]" />
        <Tab icon={<GridIcon />} label="View by Category" w={86} width="w-[128px]" active gap="ml-[9px]" />
      </div>
      <div className="flex flex-1 items-center justify-between pl-[6px] pr-[3px] pt-px">
        <T w={103} className={fTah}>Delete the selection</T>
        <T w={51} className={fTah}>[-372,-20]</T>
      </div>
    </div>
  );
}

/* ---------- taskbar ---------- */

function TaskButton({ active, className, children }: { active?: boolean; className: string; children: ReactNode }) {
  return (
    <div
      className={`flex h-[38px] shrink-0 items-center justify-center rounded-[2px] border border-[#2c6683] shadow-[inset_0_0_0_1px_#ffffff66] ${className} ${
        active ? "bg-[linear-gradient(135deg,#e2f3f8e6,#a5d3e2aa_50%,#b5dfeaaa)]" : "bg-[linear-gradient(135deg,#bfe2ee99,#7fc0d888_50%,#8ccbe088)]"
      }`}
    >
      {children}
    </div>
  );
}

function Taskbar() {
  return (
    <div className="relative flex h-[39px] shrink-0 items-center overflow-hidden border-t border-[#2a4f5e] bg-[linear-gradient(90deg,#3a6f98_0,#2c6f9a_60px,#3a95bd_110px,#4aa9cc_170px,#48a7cb_440px,#4ba6d3_520px,#3c8fc9_640px,#448dcf_760px,#3b82c1_860px,#4087c6_930px,#2f70b4_960px,#2b66ab_1150px,#22508a_1185px,#1d4275_1300px,#1b3c66_1365px)]">
      <svg width="1365" height="38" viewBox="0 0 1365 38" className="absolute left-0 top-0" fill="none">
        <path d="M670 0H730L760 38H700Z" fill="#fff" opacity=".06" className="blur-[3px]" />
        <path d="M830 0H870L900 38H840Z" fill="#0b3f80" opacity=".14" className="blur-[4px]" />
        <path d="M970 0H986L1028 38H1014Z" fill="#e4eef6" opacity=".85" className="blur-[1.5px]" />
        <path d="M0 .5H1365" stroke="#fff" opacity=".35" />
      </svg>
      <div className="relative flex h-full items-center">
        <svg width="38" height="38" viewBox="0 0 38 38" className="ml-[8px] block" fill="none">
          <circle cx="19" cy="19" r="17.8" fill="#2b5f8c" stroke="#1b3f63" />
          <circle cx="19" cy="19" r="16.2" fill="#3f7fae" />
          <path d="M4 15C8 1 30 1 34 15C25 20 13 20 4 15Z" fill="#c3d9e6" opacity=".65" />
          <ellipse cx="19" cy="29" rx="11" ry="6" fill="#4bd0f2" opacity=".65" />
          <path d="M11 10.5C13.5 9 16.5 9 19 11L17.5 18.5C15 16.8 12 16.8 8.8 18.1Z" fill="#ee5a27" />
          <path d="M20.3 11.5C23 12.8 26 12.8 29.5 11.3L27.5 19C24.5 20.3 21.5 20.3 18.8 18.9Z" fill="#86c13e" />
          <path d="M8.5 19.5C11.7 18.1 14.5 18.2 17.2 19.8L15.5 27C13 25.5 10 25.5 6.8 26.8Z" fill="#3d9be8" />
          <path d="M18.5 20.5C21.2 21.8 24 21.8 27.2 20.4L25.3 28C22.3 29.4 19.5 29.3 16.8 27.8Z" fill="#fcc92f" />
        </svg>
        <svg width="32" height="32" viewBox="0 0 32 32" className="ml-[28px] block" fill="none">
          <circle cx="16.5" cy="16.5" r="10" stroke="#1a559c" strokeWidth="5.5" />
          <path d="M8 9C12 4 20 4 24 9" stroke="#4a9ede" strokeWidth="2" />
          <path d="M8 17H28.5" stroke="#1a559c" strokeWidth="4" />
          <path d="M21 19.3H30.5L28.5 25Z" fill="#3a97be" />
          <path d="M30 2.5C22 -1 4 13 2.5 24C2 31 8 30 13 27C8 28 5.5 27 6.5 22C9 13 21 3.5 30 2.5Z" fill="#f6c33c" />
          <path d="M30 2.5C31.5 4 31 7 29.5 10C30 6 29 4.5 26 4Z" fill="#f6c33c" />
        </svg>
        <TaskButton className="ml-[15px] w-[60px]">
          <svg width="34" height="32" viewBox="0 0 34 32" fill="none">
            <path d="M1.5 5L4 2H11L13 4.5H31L32.5 7V28H1.5Z" fill="#f5df8f" stroke="#c69f3c" />
            <path d="M5 3.2H8V5H5Z" fill="#3aa04a" />
            <path d="M12 5H16" stroke="#d2452a" strokeWidth="2" />
            <path d="M22 6.5H27" stroke="#3c8fd6" strokeWidth="2" />
            <path d="M1.5 9H32.5V28.5H1.5Z" fill="#fbeaa8" stroke="#d6b455" />
            <path d="M6 30V21C6 18.5 28 18.5 28 21V30H22.5V24.5H11.5V30Z" fill="#a8dbf2" stroke="#4fa6d2" />
            <path d="M9 13V23M4 18H14" stroke="#fff" strokeWidth="1.2" opacity=".9" />
          </svg>
        </TaskButton>
        <svg width="30" height="28" viewBox="0 0 30 28" className="ml-[17px] block" fill="none">
          <path d="M9 3H25L27 5V25H9Z" fill="#4f97cf" opacity=".8" />
          <path d="M6 2H23V26H6Z" fill="#79b4df" stroke="#4e8fc2" />
          <path d="M2 2H20V25H2Z" fill="#9fcdec" stroke="#5c9bcb" />
          <circle cx="11.5" cy="14" r="9.2" fill="#f07f23" />
          <path d="M8.2 8.5L17 14L8.2 19.5Z" fill="#fff" />
        </svg>
        <svg width="32" height="32" viewBox="0 0 32 32" className="ml-[31px] block" fill="none">
          <circle cx="16" cy="16" r="14.5" fill="#e66b1e" />
          <circle cx="17.5" cy="12" r="10.8" fill="#2a4f9e" />
          <path d="M10 5C13 1.5 21 1 26 6C22 6 21 10 17 8.5C14 8.5 11 7 10 5Z" fill="#4b9bdc" />
          <path d="M1.5 7C3 8.5 4 8.5 6 6.5C7 8.5 9 9.5 12 9.5C14 11 13 13 10.5 14C11 18 14 20 18 18.5C21 19.5 16 24 12 22C19 27 29 22 29.5 10C32 19 28 30 16 31C5 31 .5 20 1.5 7Z" fill="#ee7a1f" />
          <path d="M27 6C31 10 32 18 28.5 23C29.5 16 29 10 27 6Z" fill="#fbc02e" />
          <path d="M2.5 14C3.5 24 12 29 20 28C12 32 2 27 2.5 14Z" fill="#c8401a" />
        </svg>
        <TaskButton className="ml-[16px] w-[60px]">
          <svg width="30" height="30" viewBox="0 0 30 30" fill="none">
            <circle cx="15" cy="15" r="14.5" fill="#fccb2f" />
            <path d="M15 15L2.5 7.7A14.5 14.5 0 0 0 14 29.5L20.5 18Z" fill="#3aa757" />
            <path d="M2.4 7.8A14.5 14.5 0 0 1 27.6 8.2H15L9 18.5Z" fill="#dd4b3e" />
            <path d="M27.6 8.2A14.5 14.5 0 0 1 14 29.5L21 17.5Z" fill="#fccb2f" />
            <circle cx="15" cy="15" r="6.9" fill="#fff" />
            <circle cx="15" cy="15" r="5.4" fill="#4a86ea" />
          </svg>
        </TaskButton>
        <TaskButton active className="ml-[2px] w-[60px]">
          <svg width="34" height="30" viewBox="0 0 34 30"><path d="M1 1H20L33 15H14Z" fill="#d9dc55" /><path d="M14 15H33L20 29H1Z" fill="#8d9110" /></svg>
        </TaskButton>
        <TaskButton className="ml-[2px] w-[60px]">
          <svg width="32" height="32" viewBox="0 0 32 32" fill="none">
            <path d="M1.5 26V7C2 3.5 5 1.5 9 1.5H26V8" stroke="#2c56a8" fill="#a9c4ea" />
            <path d="M2 26V8C3 4 6 3 9 3H12L7 28Z" fill="#2b56ae" />
            <path d="M9 4.5L30 7L28.5 30L7 26.5Z" fill="#fbfdff" stroke="#8aa6d2" />
            <path d="M11 9L12.5 17L15.5 10.5L17.5 17L20.5 9.5" stroke="#26509f" strokeWidth="2" />
            <path d="M22.5 10H27.5M22 13H27.5M22 16H27M11 20H27M10.5 23H26.5" stroke="#26509f" strokeWidth="1.7" />
          </svg>
        </TaskButton>
      </div>
      <div className="relative ml-auto flex h-full items-center">
        <svg width="8" height="5" viewBox="0 0 8 5" className="mr-[13px] mt-[3px]"><path d="M0 4.5L4 .5L8 4.5Z" fill="#fff" /></svg>
        <svg width="16" height="16" viewBox="0 0 16 16" fill="none" className="mt-[3px]">
          <path d="M6 4.5H14.5V12.5H4.5V8" stroke="#fff" strokeWidth="1.4" />
          <path d="M7 15H13M10 12.5V15" stroke="#fff" strokeWidth="1.4" />
          <path d="M1.5 .5V3.5M4.5 .5V3.5M.5 3.3H5.5V6.5H.5ZM3 6.5V11H5" stroke="#fff" />
        </svg>
        <svg width="16" height="16" viewBox="0 0 16 16" fill="none" className="ml-[8px] mt-[2px]">
          <path d="M1 5.5H3.5L7 2V14L3.5 10.5H1Z" fill="#cfd6dd" stroke="#fff" />
          <path d="M9 6.3C10 7.2 10 8.8 9 9.7M11 4.8C12.7 6.4 12.7 9.6 11 11.2M13 3.3C15.6 6 15.6 10 13 12.7" stroke="#fff" />
        </svg>
        <svg width="16" height="16" viewBox="0 0 16 16" fill="none" className="ml-[8px] mt-[2px]">
          <path d="M1.5 1V15.5" stroke="#fff" strokeWidth="1.4" />
          <path d="M3 2.5C6 1.5 8 4.5 13 3V9.5C8 11 6 8 3 9Z" fill="#fff" />
          <circle cx="11" cy="11" r="4.4" fill="#d42a20" />
          <path d="M9.2 9.2L12.8 12.8M12.8 9.2L9.2 12.8" stroke="#fff" strokeWidth="1.5" />
        </svg>
        <div className="ml-[15px] flex w-[53px] flex-col items-center pt-[2px] font-['Noto_Sans',sans-serif] text-[12px] leading-[17px] text-white">
          <T w={42}>4:50 PM</T>
          <T w={52}>2/10/2017</T>
        </div>
        <div className="ml-[10px] h-full w-[13px] border-l border-[#0f2747] bg-[linear-gradient(160deg,#6d8fb4,#2d527f_40%,#1c3f6c)] shadow-[inset_1px_0_0_#6f8fb2]" />
      </div>
    </div>
  );
}

export default function App() {
  return (
    <div className="flex h-[767px] w-[1365px] flex-col overflow-hidden bg-[#f0f0f0] leading-[16px] text-black">
      <TitleBar />
      <MenuBar />
      <Toolbar />
      <div className="flex h-[473px] shrink-0">
        <DesignDock />
        <div className="flex w-[5px] shrink-0 flex-col items-center pt-[164px]">
          <Grip className="h-[164px] w-[2px]" />
        </div>
        <CanvasTools />
        <div className="w-[1057px] shrink-0 border-l border-t border-[#808080]"><Schematic /></div>
      </div>
      <TabRows />
      <CategoryDock />
      <Taskbar />
    </div>
  );
}
